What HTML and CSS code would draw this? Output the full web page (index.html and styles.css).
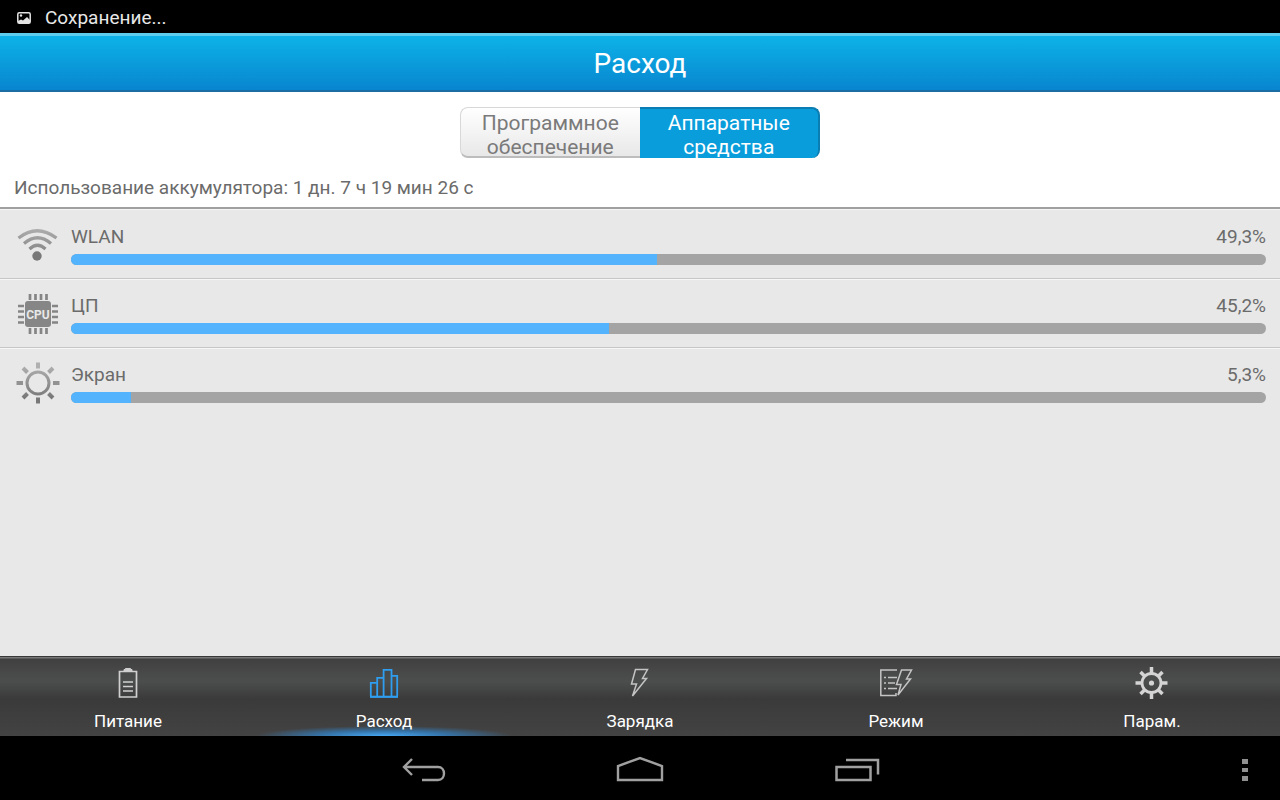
FILE: index.html
```html
<!DOCTYPE html>
<html lang="ru">
<head>
    <meta charset="UTF-8">
    <meta name="viewport" content="width=device-width, initial-scale=1.0">
    <title>Расход</title>
    <link rel="stylesheet" href="styles.css">
</head>
<body>

    <div class="status-bar">
        <svg class="status-icon" width="16" height="14" viewBox="0 0 16 14">
            <rect x="1.8" y="1.8" width="12.4" height="10.4" rx="1.5" fill="none" stroke="#e4e4e4" stroke-width="1.5"/>
            <path d="M2 12V10L5 8.500L7 9.500L11 6L14 9V12Z" fill="#e4e4e4"/>
            <circle cx="5" cy="4.500" r="1.200" fill="#e4e4e4"/>
        </svg>
        <span>Сохранение...</span>
    </div>

    <header class="title-bar">
        <h1>Расход</h1>
    </header>

    <main class="content">
        <div class="summary">
            <div class="segments">
                <button class="segment" type="button" aria-pressed="false">Программное обеспечение</button>
                <button class="segment active" type="button" aria-pressed="true">Аппаратные средства</button>
            </div>
            <p class="usage-time">Использование аккумулятора: 1 дн. 7 ч 19 мин 26 с</p>
        </div>

        <ul class="usage-list">
            <li class="usage-item">
                <svg class="usage-icon" width="44" height="44" viewBox="0 0 44 44">
                    <defs>
                        <linearGradient id="gray" gradientUnits="userSpaceOnUse" x1="0" y1="2" x2="0" y2="42">
                            <stop offset="0" stop-color="#b4b4b4"/>
                            <stop offset="1" stop-color="#707070"/>
                        </linearGradient>
                    </defs>
                    <g fill="none" stroke="url(#gray)" stroke-width="3.200">
                        <path d="M2.500 15Q21 .500 40.500 15"/>
                        <path d="M8 20.500Q21.500 9 35 20.500"/>
                        <path d="M13.500 26Q21.500 18.500 29.500 26"/>
                    </g>
                    <circle cx="21" cy="33" r="4.700" fill="#787878"/>
                </svg>
                <div class="usage-info">
                    <div class="usage-row">
                        <label for="wlan">WLAN</label>
                        <span>49,3%</span>
                    </div>
                    <progress id="wlan" value="49" max="100"></progress>
                </div>
            </li>
            <li class="usage-item">
                <svg class="usage-icon" width="44" height="44" viewBox="0 0 44 44">
                    <path d="M14 2V42M19.500 2V42M25 2V42M30.500 2V42M2 14H42M2 19.500H42M2 25H42M2 30.500H42" stroke="#858585" stroke-width="2.700"/>
                    <rect x="8" y="8" width="28" height="28" fill="#e8e8e8"/>
                    <rect x="9" y="9" width="26" height="26" rx="3" fill="#868686"/>
                    <text class="chip-text" x="22" y="27" text-anchor="middle">CPU</text>
                </svg>
                <div class="usage-info">
                    <div class="usage-row">
                        <label for="cpu">ЦП</label>
                        <span>45,2%</span>
                    </div>
                    <progress id="cpu" value="45" max="100"></progress>
                </div>
            </li>
            <li class="usage-item">
                <svg class="usage-icon" width="44" height="44" viewBox="0 0 44 44">
                    <circle cx="22" cy="22" r="11" fill="none" stroke="url(#gray)" stroke-width="3"/>
                    <g fill="none" stroke="url(#gray)" stroke-width="4">
                        <path d="M7 7L11.500 11.500M32.500 32.500L37 37M37 7L32.500 11.500M11.500 32.500L7 37"/>
                    </g>
                    <path d="M.500 22H7M37 22H43.500" stroke="#929292" stroke-width="4"/>
                    <path d="M22 36.500V42.500" stroke="#787878" stroke-width="4"/>
                    <path d="M22 1.500V7.500" stroke="#b0b0b0" stroke-width="4"/>
                </svg>
                <div class="usage-info">
                    <div class="usage-row">
                        <label for="screen">Экран</label>
                        <span>5,3%</span>
                    </div>
                    <progress id="screen" value="5" max="100"></progress>
                </div>
            </li>
        </ul>
    </main>

    <nav class="tab-bar">
        <button class="tab" type="button">
            <svg width="36" height="36" viewBox="0 0 36 36" fill="none" stroke="#d0d0d0">
                <path d="M9.500 6.500H26.500V32H9.500Z" stroke-width="1.700"/>
                <path d="M14 6V4.500H15.500V3.500H20.500V4.500H22V6Z" fill="#d0d0d0"/>
                <path d="M13 17H23M13 21.500H23M13 26H23" stroke-width="1.700"/>
            </svg>
            <span>Питание</span>
        </button>
        <button class="tab active" type="button">
            <svg width="36" height="36" viewBox="0 0 36 36" fill="none" stroke="#2f9df0" stroke-width="1.800">
                <path d="M4.800 31V17.800H11.200V31M11.200 18V12.800H17.600V31M17.600 14V4.800H25.500V31M25.500 10.800H31.200V31"/>
                <path d="M4 31.800H32" stroke-width="2.200"/>
            </svg>
            <span>Расход</span>
        </button>
        <button class="tab" type="button">
            <svg width="36" height="36" viewBox="0 0 36 36" fill="none" stroke="#c4c4c4" stroke-width="1.500">
                <path d="M13.500 4.500H25.500L20.500 13.500H24.500L10.500 31L14.500 19H9.500Z"/>
            </svg>
            <span>Зарядка</span>
        </button>
        <button class="tab" type="button">
            <svg width="36" height="36" viewBox="0 0 36 36" fill="none" stroke="#c4c4c4" stroke-width="1.500">
                <path d="M19 5H2.800V30.500H18V28"/>
                <path d="M6 12.500H8M10 12.500H19M6 18H8M10 18H17M6 23.500H8M10 23.500H19" stroke-width="1.600"/>
                <path d="M23.500 5H33.500L28.500 14H32.500L20 30L23 19.500H18.500Z"/>
            </svg>
            <span>Режим</span>
        </button>
        <button class="tab" type="button">
            <svg width="36" height="36" viewBox="0 0 36 36" fill="none" stroke="#d4d4d4" stroke-width="3.500">
                <circle cx="17.500" cy="18" r="9.500" stroke-width="2.800"/>
                <path d="M17.500 2V8M17.500 28V34M1.500 18H7.500M27.500 18H33.500M6.500 7L10.500 11M24.500 25L28.500 29M28.500 7L24.500 11M10.500 25L6.500 29"/>
                <circle cx="17.500" cy="18" r="2.600" fill="#d4d4d4" stroke="none"/>
            </svg>
            <span>Парам.</span>
        </button>
    </nav>

    <div class="system-bar">
        <div class="system-keys">
            <button class="key" type="button" aria-label="Назад">
                <svg width="48" height="32" viewBox="0 0 48 32" fill="none" stroke="#a0a0a0" stroke-width="2.400">
                    <path d="M12 5L4 13L12 21M5 13H38C46 13 46 26 38 26H22"/>
                </svg>
            </button>
            <button class="key" type="button" aria-label="Домой">
                <svg width="48" height="32" viewBox="0 0 48 32" fill="none" stroke="#a0a0a0" stroke-width="2.400">
                    <path d="M2 26V12L24 4L46 12V26Z"/>
                </svg>
            </button>
            <button class="key" type="button" aria-label="Недавние">
                <svg width="48" height="32" viewBox="0 0 48 32" fill="none" stroke="#a0a0a0" stroke-width="2.500">
                    <path d="M4.500 13H38.500V26H4.500ZM14 6H46V20.500"/>
                </svg>
            </button>
        </div>
        <button class="key key-menu" type="button" aria-label="Меню">
            <svg width="6" height="24" viewBox="0 0 6 24" fill="#909090">
                <path d="M0 1H6V6H0ZM0 10H6V14H0ZM0 18H6V23H0Z"/>
            </svg>
        </button>
    </div>

</body>
</html>
```
FILE: styles.css
```css
* {
    box-sizing: border-box;
}
body {
    display: flex;
    flex-direction: column;
    min-height: 100vh;
    margin: 0;
    font-family: Roboto, sans-serif;
    font-size: 19px;
    line-height: 24px;
    color: #6b6b6b;
    background-color: #e8e8e8;
}
button {
    margin: 0;
    padding: 0;
    border: none;
    background: none;
    font-family: inherit;
    cursor: pointer;
}
svg {
    display: block;
    flex-shrink: 0;
}

/* top */
.status-bar {
    display: flex;
    align-items: center;
    gap: 13px;
    height: 33px;
    padding: 2px 16px 0;
    background-color: #000;
    color: #e8e8e8;
}
.title-bar {
    display: flex;
    align-items: center;
    justify-content: center;
    height: 59px;
    padding-top: 2px;
    border-top: 3px solid #5fcdee;
    border-bottom: 2px solid #1b6da3;
    background: linear-gradient(#0db3e8, #0885cf);
}
.title-bar h1 {
    margin: 0;
    font-size: 28px;
    font-weight: normal;
    line-height: 32px;
    color: #fff;
}
.content {
    flex: 1;
}
.summary {
    padding: 15px 14px 7px;
    background-color: #fff;
    border-bottom: 2px solid #a0a0a0;
}
.segments {
    display: flex;
    width: 360px;
    height: 51px;
    margin: 0 auto;
}
.segment {
    flex: 1;
    display: flex;
    align-items: flex-start;
    justify-content: center;
    padding: 3px 16px 0;
    overflow: hidden;
    border: 1px solid #d8d8d8;
    border-right: none;
    border-bottom: 2px solid #bcbcbc;
    border-radius: 8px 0 0 8px;
    background: linear-gradient(#fff, #e8e8e8);
    font-size: 21px;
    line-height: 24px;
    color: #7a7a7a;
}
.segment.active {
    border: 1px solid #0a7db3;
    border-width: 2px 2px 0 0;
    border-radius: 0 8px 8px 0;
    padding-top: 2px;
    background: #0a9ddb;
    color: #fff;
}
.usage-time {
    margin: 18px 0 0;
}

/* usage list */
.usage-list {
    margin: 0;
    padding: 0;
    list-style: none;
}
.usage-item {
    display: flex;
    align-items: center;
    gap: 11px;
    height: 69px;
    padding: 2px 14px 0 16px;
    border-top: 1px solid #f6f6f6;
    box-shadow: 0 1px 0 #c6c6c6;
}
.usage-item:last-child {
    box-shadow: none;
}
.usage-info {
    flex: 1;
}
.usage-row {
    display: flex;
    justify-content: space-between;
    margin-bottom: 5px;
}
.usage-item + .usage-item {
    border-top-color: #c6c6c6;
    box-shadow: inset 0 1px 0 #f6f6f6;
}
.usage-item:first-child {
    box-shadow: none;
}
progress {
    display: block;
    width: 100%;
    height: 11px;
    overflow: hidden;
    border: none;
    border-radius: 6px;
    background-color: #a4a4a4;
    appearance: none;
}
progress::-webkit-progress-bar {
    background-color: #a4a4a4;
}
progress::-webkit-progress-value {
    background-color: #53b3fc;
}
.chip-text {
    font-family: Roboto, sans-serif;
    font-size: 12px;
    font-weight: bold;
    fill: #e8e8e8;
}

/* tabs */
.tab-bar {
    display: flex;
    height: 80px;
    border-top: 1px solid #383838;
    background: linear-gradient(#777 0, #777 1px, #404040 2px, #4c4e4d 24px, #3a3a3a 42px, #434343 100%);
}
.tab {
    flex: 1;
    display: flex;
    flex-direction: column;
    align-items: center;
    gap: 8px;
    padding-top: 8px;
    font-size: 17px;
    line-height: 24px;
    color: #fff;
}
.tab.active {
    background: radial-gradient(ellipse 50% 10px at 50% 100%, #45a8f5, rgba(47, 135, 210, 0.7) 50%, transparent);
}

/* system keys */
.system-bar {
    display: grid;
    grid-template-columns: 1fr auto 1fr;
    height: 64px;
    background-color: #000;
}
.system-keys {
    display: flex;
    grid-column: 2;
}
.key {
    display: flex;
    align-items: center;
    justify-content: center;
    width: 216px;
    padding-top: 4px;
}
.key-menu {
    justify-self: end;
    width: 70px;
}
```
